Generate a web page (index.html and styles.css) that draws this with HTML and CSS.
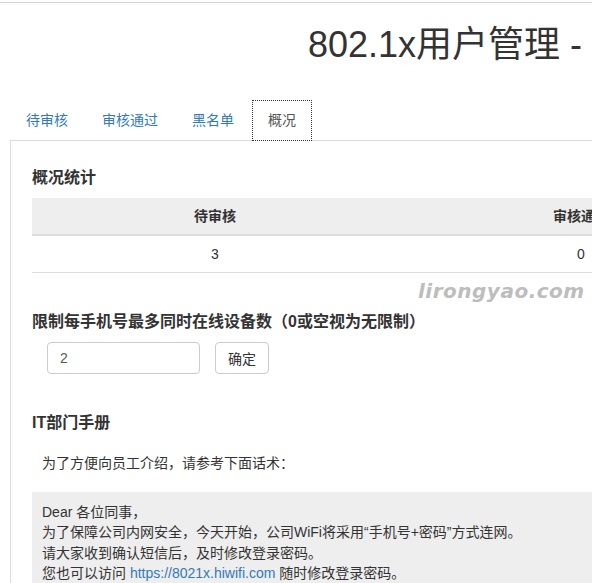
FILE: index.html
```html
<!DOCTYPE html>
<html lang="zh-CN">
<head>
<meta charset="utf-8">
<title>802.1x用户管理</title>
<link rel="stylesheet" href="styles.css">
</head>
<body>
<div class="page">
  <div class="topline"></div>
  <h1 class="title">802.1x用户管理 -</h1>
  <ul class="tabs">
    <li><a class="tab">待审核</a></li>
    <li><a class="tab">审核通过</a></li>
    <li><a class="tab">黑名单</a></li>
    <li><a class="tab active">概况</a></li>
  </ul>
  <div class="panel">
    <h4 class="heading first">概况统计</h4>
    <table class="stats">
      <thead>
        <tr><th>待审核</th><th>审核通过</th><th>黑名单</th><th>在线设备</th><th>总数</th></tr>
      </thead>
      <tbody>
        <tr><td>3</td><td>0</td><td>0</td><td>0</td><td>3</td></tr>
      </tbody>
    </table>
    <div class="watermark">lirongyao.com</div>
    <h4 class="heading limit">限制每手机号最多同时在线设备数（0或空视为无限制）</h4>
    <div class="form-row">
      <input class="num-input" type="text" value="2">
      <button class="btn" type="button">确定</button>
    </div>
    <h4 class="heading manual">IT部门手册</h4>
    <p class="intro">为了方便向员工介绍，请参考下面话术：</p>
    <div class="well">
      Dear 各位同事，<br>
      为了保障公司内网安全，今天开始，公司WiFi将采用“手机号+密码”方式连网。<br>
      请大家收到确认短信后，及时修改登录密码。<br>
      您也可以访问 <a class="link">https://8021x.hiwifi.com</a> 随时修改登录密码。<br>
      如有疑问，请联系IT部门。
    </div>
  </div>
</div>
</body>
</html>
```

FILE: styles.css
```css
html, body {
  margin: 0;
  padding: 0;
  background: #fff;
  overflow: hidden;
}

body {
  font-family: "Liberation Sans", "Noto Sans CJK SC", sans-serif;
  font-size: 14px;
  line-height: 20px;
  color: #333;
}

.page {
  width: 1900px;
}

.topline {
  margin-top: 2px;
  border-top: 1px solid #d6d6d6;
}

.title {
  margin: 22px 0 0 0;
  padding-left: 308px;
  font-size: 36px;
  line-height: 40px;
  font-weight: normal;
  color: #333;
  white-space: nowrap;
}

.tabs {
  display: flex;
  list-style: none;
  margin: 35px 0 0 10px;
  padding: 0;
  border-bottom: 1px solid #ddd;
}

.tab {
  display: block;
  padding: 9px 15px 10px 15px;
  line-height: 20px;
  border: 1px solid transparent;
  margin-right: 2px;
  margin-bottom: -1px;
  color: #337ab7;
  white-space: nowrap;
}

.tab.active {
  border: 1px dotted #333;
  background: #fff;
  color: #555;
}

.panel {
  position: relative;
  margin-left: 10px;
  border-left: 1px solid #ddd;
  padding: 26px 0 200px 21px;
}

.heading {
  margin: 0;
  font-size: 16px;
  line-height: 22px;
  font-weight: bold;
  color: #333;
  white-space: nowrap;
}

.heading.limit {
  margin-top: 38px;
}

.heading.manual {
  margin-top: 38px;
}

.stats {
  margin-top: 9px;
  width: 1830px;
  border-collapse: collapse;
  table-layout: fixed;
}

.stats th,
.stats td {
  text-align: center;
  padding: 8px;
  line-height: 20px;
}

.stats th {
  background: #eeeeee;
  font-weight: bold;
  border-bottom: 2px solid #ddd;
}

.stats td {
  border-bottom: 1px solid #ddd;
}

.watermark {
  position: absolute;
  left: 407px;
  top: 140px;
  font-family: "DejaVu Sans", sans-serif;
  font-size: 20px;
  font-weight: bold;
  font-style: italic;
  color: #bdbdbd;
  letter-spacing: 0.5px;
}

.form-row {
  display: flex;
  gap: 15px;
  margin: 9px 0 0 15px;
}

.num-input {
  box-sizing: border-box;
  width: 153px;
  height: 32px;
  padding: 6px 12px;
  border: 1px solid #ccc;
  border-radius: 4px;
  font-family: "Liberation Sans", "Noto Sans CJK SC", sans-serif;
  font-size: 14px;
  color: #555;
  margin: 0;
}

.btn {
  box-sizing: border-box;
  width: 54px;
  height: 32px;
  padding: 0;
  border: 1px solid #ccc;
  border-radius: 4px;
  background: #fff;
  font-family: "Liberation Sans", "Noto Sans CJK SC", sans-serif;
  font-size: 14px;
  color: #333;
  margin: 0;
}

.intro {
  margin: 19px 0 0 0;
  padding-left: 10px;
  line-height: 20px;
}

.well {
  margin-top: 19px;
  padding: 10px 10px;
  background: #eeeeee;
  line-height: 20.3px;
  white-space: nowrap;
}

.link {
  color: #337ab7;
}
```
